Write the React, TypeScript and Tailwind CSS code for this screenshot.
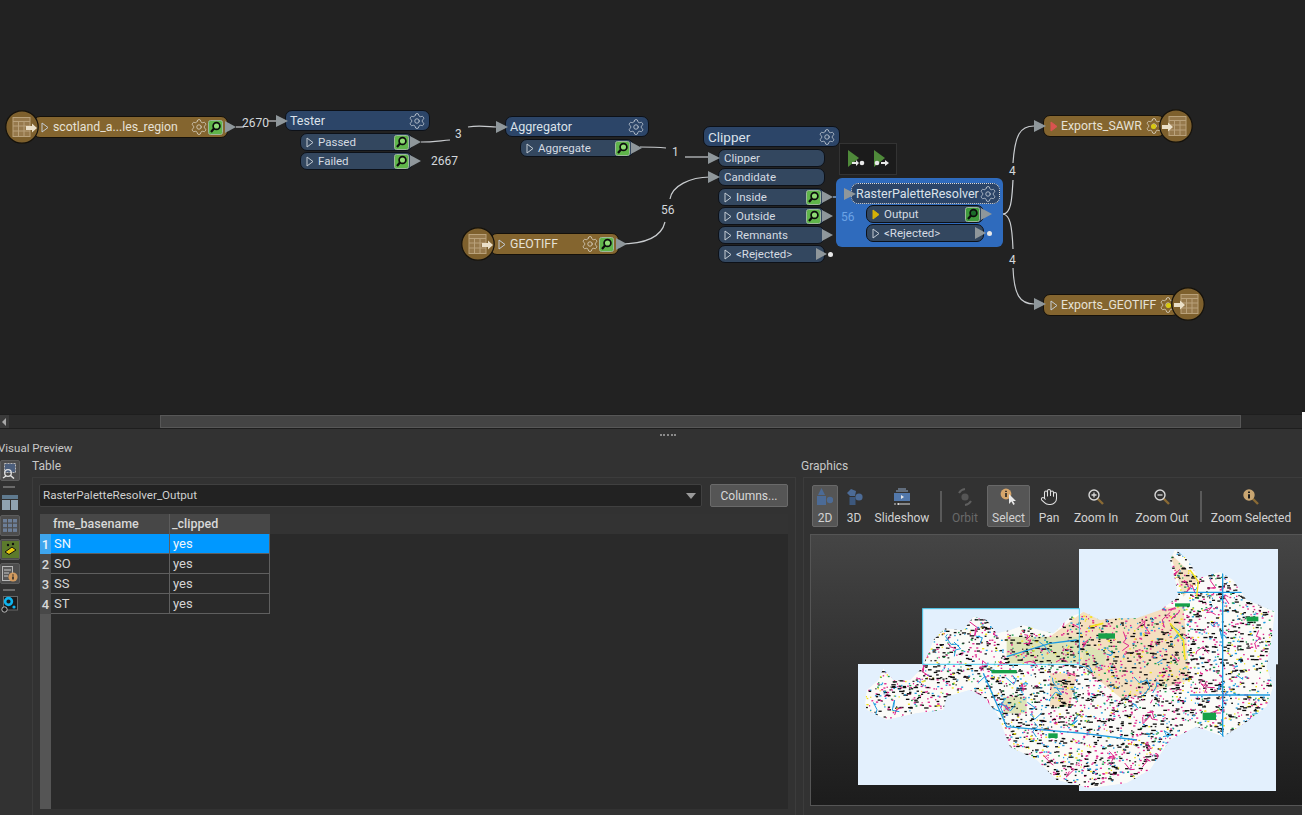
import React from "react";
import { Settings, Hand } from "lucide-react";

const FONT = "font-['Roboto','Open_Sans',sans-serif]";

// small drawings used on the canvas
const Gear = ({ className = "" }: { className?: string }) => (
  <Settings className={`w-[18px] h-[18px] shrink-0 ${className}`} strokeWidth={1.1} />
);

const Inspect = ({ dark = false }: { dark?: boolean }) => (
  <svg width="15" height="15" viewBox="0 0 15 15" className="shrink-0">
    <rect x="0.5" y="0.5" width="14" height="14" rx="2" fill={dark ? "#3f9a3c" : "#5fb54a"} stroke="#9db89a" />
    <circle cx="8.5" cy="6" r="3.4" fill={dark ? "#1c6b2a" : "#8fdc74"} stroke="#0c0c0c" strokeWidth="1.7" />
    <path d="M6 8.5 L3 12" stroke="#0c0c0c" strokeWidth="2.2" />
  </svg>
);

const OutPort = () => (
  <svg width="11" height="12" viewBox="0 0 11 12" className="shrink-0">
    <path d="M0 0 L11 6 L0 12 Z" fill="#8f979b" />
  </svg>
);

const InPort = ({ className }: { className: string }) => (
  <svg width="12" height="12" viewBox="0 0 12 12" className={`absolute z-10 ${className}`}>
    <path d="M0 0 L12 6 L0 12 Z" fill="#8f979b" />
  </svg>
);

const Expand = ({ fill = "none", stroke = "#c4ccd4" }: { fill?: string; stroke?: string }) => (
  <svg width="8" height="11" viewBox="0 0 8 11" className="shrink-0">
    <path d="M1 1 L7 5.5 L1 10 Z" fill={fill} stroke={stroke} strokeWidth="1" />
  </svg>
);

const TableDisc = ({ className, flip = false }: { className: string; flip?: boolean }) => (
  <div className={`absolute z-10 ${className}`}>
    <svg width="34" height="34" viewBox="0 0 34 34">
      <circle cx="17" cy="17" r="16.2" fill="#7e602d" stroke="#14110b" strokeWidth="1.2" />
      <g stroke="#b9a17a" strokeWidth="1" fill="#96794c">
        <rect x={flip ? 10 : 8} y="7.5" width="17" height="19" />
        <path
          d={flip ? "M10 11.5 H27 M10 16 H27 M10 21 H27 M15.5 11.5 V26.5 M21 11.5 V26.5" : "M8 11.5 H25 M8 16 H25 M8 21 H25 M13.5 11.5 V26.5 M19 11.5 V26.5"}
          fill="none"
        />
      </g>
      {flip ? (
        <path d="M3 16 H9 V13.5 L14 18 L9 22.5 V20 H3 Z" fill="#eadfc8" />
      ) : (
        <path d="M21 16 H27 V13.5 L32 18 L27 22.5 V20 H21 Z" fill="#eadfc8" />
      )}
    </svg>
  </div>
);

const Count = ({ className, children }: { className: string; children: React.ReactNode }) => (
  <span className={`absolute text-[12px] leading-[16px] text-[#d4d8dc] ${className}`}>{children}</span>
);

const Port = ({
  className,
  label,
  inspect = false,
  dark = false,
  expandFill,
  expandStroke,
  dot = false,
  out = true,
  expand = true,
}: {
  className: string;
  label: string;
  inspect?: boolean;
  dark?: boolean;
  expandFill?: string;
  expandStroke?: string;
  dot?: boolean;
  out?: boolean;
  expand?: boolean;
}) => (
  <div
    className={`absolute flex items-center h-[18px] pl-[5px] pr-[3px] gap-[4px] rounded-[7px] bg-[#33475f] border border-[#0d1118] text-[11.5px] text-[#d5dbe2] ${className}`}
  >
    {expand && <Expand fill={expandFill} stroke={expandStroke} />}
    <span className="flex-1 whitespace-nowrap pt-[2px]">{label}</span>
    {inspect && <Inspect dark={dark} />}
    {out ? (
      <span className="absolute right-[-9px] top-[2px] flex items-center">
        <OutPort />
        {dot && <span className="ml-[1px] w-[5px] h-[5px] rounded-full bg-[#e8e8e8]" />}
      </span>
    ) : null}
  </div>
);

const Head = ({ className, label, textSize = "text-[12.5px]", dashed = false }: { className: string; label: string; textSize?: string; dashed?: boolean }) => (
  <div
    className={`absolute flex items-center justify-between h-[21px] pl-[4px] pr-[3px] rounded-[7px] bg-[#2c4568] border text-[#dbe2ea] ${
      dashed ? "border-dotted border-[#d8d8d8]" : "border-[#0d1118]"
    } ${textSize} ${className}`}
  >
    <span className="whitespace-nowrap pt-[1px]">{label}</span>
    <Gear className="text-[#c4ccd6]" />
  </div>
);

const Bar = ({
  className,
  label,
  gearDot = false,
  inspect = false,
  expandFill,
  expandStroke,
  pad = "pl-[8px]",
}: {
  className: string;
  label: string;
  gearDot?: boolean;
  inspect?: boolean;
  expandFill?: string;
  expandStroke?: string;
  pad?: string;
}) => (
  <div
    className={`absolute flex items-center h-[22px] gap-[4px] rounded-[7px] bg-[#84652f] border border-[#15110a] text-[12.3px] text-[#e6e1d6] ${pad} ${className}`}
  >
    <Expand fill={expandFill} stroke={expandStroke} />
    <span className="flex-1 whitespace-nowrap pt-[1px]">{label}</span>
    <span className={`relative flex items-center justify-center ${inspect ? "-mr-[4px]" : ""}`}>
      <Gear className="text-[#d9d2c2]" />
      {gearDot && <span className="absolute w-[5px] h-[5px] rounded-full bg-[#d8c90e]" />}
    </span>
    {inspect && <Inspect />}
  </div>
);

const Canvas = () => (
  <div className="relative h-[414px] bg-[#222222] overflow-hidden">
    <svg width="1305" height="414" className="absolute inset-0" fill="none" stroke="#c9cccf" strokeWidth="1.2">
      <path d="M236 127 H244" />
      <path d="M268 121 H276" />
      <path d="M421 142 C432 142 438 141 450 140" />
      <path d="M468 127 C480 125 490 127 496 127" />
      <path d="M640 147 C650 147 656 147 666 148" />
      <path d="M685 157 H708" />
      <path d="M619 244 C650 244 662 235 665 222" />
      <path d="M670 199 C672 186 690 177 710 177" />
      <path d="M1003 214 C1012 214 1012 195 1013 180" stroke="#d0d4d8" />
      <path d="M1013 163 C1015 135 1020 126 1034 126" />
      <path d="M1003 214 C1010 215 1012 225 1013 249" />
      <path d="M1013 268 C1014 295 1020 304 1034 304" />
      <path d="M985 214 H1003" stroke="#9cc4f2" />
      <path d="M836 194 H851" stroke="#9cc4f2" />
      <path d="M833 197 H845" stroke="#9cc4f2" />
    </svg>

    {/* reader */}
    <TableDisc className="left-[5px] top-[110px]" />
    <Bar className="left-[33px] top-[116px] w-[195px] pr-[4px]" label="scotland_a...les_region" inspect pad="pl-[7px]" />
    <span className="absolute left-[225px] top-[121px]"><OutPort /></span>
    <Count className="left-[242px] top-[115px]">2670</Count>
    <InPort className="left-[276px] top-[115px]" />

    {/* tester */}
    <Head className="left-[285px] top-[110px] w-[145px]" label="Tester" />
    <Port className="left-[300px] top-[133px] w-[113px]" label="Passed" inspect />
    <Port className="left-[300px] top-[152px] w-[113px]" label="Failed" inspect />
    <Count className="left-[455px] top-[126px]">3</Count>
    <Count className="left-[431px] top-[153px]">2667</Count>

    {/* aggregator */}
    <InPort className="left-[496px] top-[121px]" />
    <Head className="left-[505px] top-[116px] w-[144px]" label="Aggregator" />
    <Port className="left-[520px] top-[139px] w-[114px]" label="Aggregate" inspect />
    <Count className="left-[672px] top-[144px]">1</Count>

    {/* clipper */}
    <Head className="left-[703px] top-[126px] w-[137px]" label="Clipper" textSize="text-[13.5px]" />
    <InPort className="left-[708px] top-[152px]" />
    <InPort className="left-[708px] top-[171px]" />
    <Port className="left-[718px] top-[149px] w-[107px]" label="Clipper" out={false} expand={false} />
    <Port className="left-[718px] top-[168px] w-[107px]" label="Candidate" out={false} expand={false} />
    <Port className="left-[718px] top-[188px] w-[107px]" label="Inside" inspect />
    <Port className="left-[718px] top-[207px] w-[107px]" label="Outside" inspect />
    <Port className="left-[718px] top-[226px] w-[107px]" label="Remnants" />
    <Port className="left-[718px] top-[245px] w-[107px]" label="<Rejected>" dot />
    <Count className="left-[661px] top-[202px]">56</Count>

    {/* geotiff */}
    <TableDisc className="left-[461px] top-[227px]" />
    <Bar className="left-[490px] top-[233px] w-[129px] pr-[4px]" label="GEOTIFF" inspect pad="pl-[7px]" />
    <span className="absolute left-[616px] top-[238px]"><OutPort /></span>

    {/* run buttons */}
    <div className="absolute left-[839px] top-[143px] flex items-center gap-[9px] w-[58px] h-[32px] pl-[8px] bg-[#1b1b1b] border border-[#333333]">
      <svg width="17" height="18" viewBox="0 0 17 18">
        <path d="M0 0 L11 8 L0 17 Z" fill="#4f8a3a" />
        <path d="M4 12 H8 V10 L11 13 L8 16 V14 H4 Z" fill="#e8e8e8" />
        <circle cx="14" cy="13" r="2.3" fill="#e8e8e8" />
      </svg>
      <svg width="17" height="18" viewBox="0 0 17 18">
        <path d="M0 0 L11 8 L0 17 Z" fill="#4f8a3a" />
        <circle cx="3" cy="13" r="2.3" fill="#e8e8e8" />
        <path d="M7 12 H11 V10 L15 13 L11 16 V14 H7 Z" fill="#e8e8e8" />
      </svg>
    </div>

    {/* selected transformer */}
    <div className="absolute left-[836px] top-[178px] w-[167px] h-[69px] rounded-[6px] bg-[#2f6bbd]" />
    <span className="absolute left-[841px] top-[208px] text-[12px] text-[#6ba3e6]">56</span>
    <Head className="left-[851px] top-[183px] w-[149px]" label="RasterPaletteResolver" dashed />
    <InPort className="left-[844px] top-[188px]" />
    <Port className="left-[866px] top-[205px] w-[118px]" label="Output" inspect dark expandFill="#d4b106" expandStroke="#d4b106" />
    <Port className="left-[866px] top-[224px] w-[118px]" label="<Rejected>" dot />

    {/* writers */}
    <InPort className="left-[1034px] top-[120px]" />
    <Bar className="left-[1043px] top-[115px] w-[122px] pr-[6px] !gap-[3px]" label="Exports_SAWR" gearDot expandFill="#d9534f" expandStroke="#d9534f" pad="pl-[6px]" />
    <TableDisc className="left-[1159px] top-[109px]" flip />
    <Count className="left-[1009px] top-[163px]">4</Count>
    <Count className="left-[1009px] top-[252px]">4</Count>
    <InPort className="left-[1034px] top-[298px]" />
    <Bar className="left-[1043px] top-[294px] w-[136px] pr-[7px] !gap-[3px]" label="Exports_GEOTIFF" gearDot pad="pl-[6px]" />
    <TableDisc className="left-[1171px] top-[287px]" flip />
  </div>
);

const ScrollBar = () => (
  <div className="flex items-center h-[15px] bg-[#2b2b2b] border-y border-[#1e1e1e]">
    <div className="flex items-center justify-center w-[9px] h-full bg-[#3a3a3a]">
      <svg width="5" height="8" viewBox="0 0 5 8"><path d="M4 0 L0 4 L4 8 Z" fill="#a8a8a8" /></svg>
    </div>
    <div className="ml-[151px] w-[1081px] h-[13px] bg-[#444444] border border-[#575757]" />
  </div>
);

// seeded so the picture stays the same on each load
const rng = (seed: number) => () => {
  seed = (seed * 16807) % 2147483647;
  return seed / 2147483647;
};

const LAND =
  "45,490 50,450 85,420 100,385 130,420 180,420 215,385 235,340 250,300 285,265 340,270 370,230 410,240 440,280 480,270 520,255 570,270 610,280 660,230 700,215 750,240 800,235 860,235 930,210 985,170 975,120 960,60 975,28 1015,60 1045,115 1110,95 1150,120 1190,180 1240,200 1275,215 1265,300 1250,380 1270,440 1250,500 1190,545 1120,590 1040,560 960,600 900,690 830,730 720,745 620,720 560,660 480,620 440,520 400,470 360,450 290,470 280,510 200,520 110,540 50,510";

const COLORS = ["#111111", "#111111", "#111111", "#2a2a2a", "#e0218a", "#e0218a", "#e0218a", "#1e9be0", "#1e9be0", "#1a9a4a", "#f2e31c"];

const marks = (() => {
  const r = rng(4711);
  return Array.from({ length: 7000 }, () => {
    const c = COLORS[Math.floor(r() * COLORS.length)];
    return { x: 40 + r() * 1240, y: 30 + r() * 720, w: c === "#111111" ? 5 + r() * 9 : 3 + r() * 4, c };
  });
})();

// short road pieces, pink and blue
const roads = (() => {
  const r = rng(90210);
  return Array.from({ length: 150 }, (_, i) => {
    let x = 60 + r() * 1200;
    let y = 60 + r() * 680;
    let d = `M${x.toFixed(0)} ${y.toFixed(0)}`;
    const steps = 2 + Math.floor(r() * 3);
    for (let s = 0; s < steps; s++) {
      x += (r() - 0.5) * 50;
      y += (r() - 0.5) * 50;
      d += ` L${x.toFixed(0)} ${y.toFixed(0)}`;
    }
    return { d, c: i % 5 < 3 ? "#e0218a" : "#1e9be0" };
  });
})();

const MapPicture = () => (
  <svg width="440" height="260" viewBox="0 0 1320 780" className="absolute left-[39px] top-[5px]">
    <defs>
      <clipPath id="land">
        <polygon points={LAND} />
      </clipPath>
      <filter id="soft">
        <feGaussianBlur stdDeviation="1.6" />
      </filter>
    </defs>
    <rect x="24" y="372" width="663" height="363" fill="#e3f0fd" />
    <rect x="218" y="206" width="470" height="167" fill="#e3f0fd" />
    <rect x="687" y="27" width="597" height="346" fill="#e3f0fd" />
    <rect x="687" y="372" width="591" height="381" fill="#e3f0fd" />
    <g clipPath="url(#land)" filter="url(#soft)">
      <polygon points={LAND} fill="#fbfbf8" />
      <path d="M600 290 L700 215 L1000 200 L1020 420 L820 480 L720 400 Z" fill="#f4dfc0" />
      <path d="M960 40 L1045 120 L1000 170 Z" fill="#f4dfc0" />
      <path d="M470 290 L690 290 L690 370 L470 370 Z" fill="#dde3b6" />
      <path d="M460 470 L530 470 L530 520 L460 520 Z" fill="#dde3b6" />
      <path d="M700 310 L770 340 L760 390 L700 370 Z" fill="#dde3b6" />
      <path d="M600 400 L680 400 L660 500 L600 500 Z" fill="#f4dfc0" />
      {marks.map((m, i) => (
        <rect key={i} x={m.x} y={m.y} width={m.w} height="4" fill={m.c} />
      ))}
      {roads.map((p, i) => (
        <path key={i} d={p.d} fill="none" stroke={p.c} strokeWidth="3" />
      ))}
      <g fill="none" strokeWidth="4">
        <path d="M980 157 H1190 M1118 100 V590 M1020 465 H1260" stroke="#1e9be0" />
        <path d="M470 350 L600 310 L680 300 M400 400 L470 560 L700 580 L860 600" stroke="#1e9be0" />
        <path d="M960 250 L1000 300 L1005 360" stroke="#f2e31c" strokeWidth="5" />
        <path d="M720 260 L760 250" stroke="#f2e31c" strokeWidth="5" />
        <path d="M1020 90 L1045 125 L1040 170" stroke="#f2e31c" strokeWidth="4" />
      </g>
      <g fill="#12a04a">
        <rect x="425" y="390" width="75" height="10" />
        <rect x="745" y="280" width="50" height="16" />
        <rect x="1190" y="230" width="35" height="14" />
        <rect x="1058" y="518" width="40" height="22" />
        <rect x="595" y="580" width="28" height="14" />
        <rect x="975" y="190" width="45" height="10" />
      </g>
    </g>
    <rect x="218" y="206" width="470" height="167" fill="none" stroke="#4fd0f5" strokeWidth="3" />
  </svg>
);

const ToolBtn = ({ label, active = false, dim = false, children, className = "" }: { label: string; active?: boolean; dim?: boolean; children: React.ReactNode; className?: string }) => (
  <div
    className={`flex flex-col items-center justify-between h-[42px] pt-[2px] rounded-[2px] text-[12px] leading-[16px] whitespace-nowrap ${
      active ? "bg-[#555555] border border-[#686868]" : "border border-transparent"
    } ${dim ? "text-[#696969]" : "text-[#d2d2d2]"} ${className}`}
  >
    <span className="flex items-center justify-center h-[18px]">{children}</span>
    <span>{label}</span>
  </div>
);

const Loupe = ({ mark, tan = false }: { mark: "plus" | "minus" | "info"; tan?: boolean }) => (
  <svg width="18" height="18" viewBox="0 0 18 18">
    <path d="M10.5 10.5 L16 16" stroke="#8a6a34" strokeWidth="2.4" />
    <circle cx="7" cy="7" r="5" fill={tan ? "#c9a672" : "none"} stroke={tan ? "#c9a672" : "#d8d8d8"} strokeWidth="1.4" />
    {mark === "plus" && <path d="M4.5 7 H9.5 M7 4.5 V9.5" stroke="#d8d8d8" strokeWidth="1.3" />}
    {mark === "minus" && <path d="M4.5 7 H9.5" stroke="#d8d8d8" strokeWidth="1.3" />}
    {mark === "info" && <path d="M7 3.5 V5 M7 6.2 V10.5" stroke="#1c1c1c" strokeWidth="2" />}
  </svg>
);

const Sep = ({ className }: { className: string }) => <span className={`w-[2px] h-[31px] bg-[#5a5a5a] ${className}`} />;

const SideBtn = ({ children, framed = true }: { children: React.ReactNode; framed?: boolean }) => (
  <div className={`flex items-center justify-center w-[20px] ${framed ? "h-[21px] rounded-[2px] bg-[#4d4d4d] border border-[#5d5d5d]" : "h-[19px]"}`}>{children}</div>
);

const Sidebar = () => (
  <div className="flex flex-col items-start gap-[3px] w-[32px] shrink-0">
    <SideBtn>
      <svg width="16" height="16" viewBox="0 0 16 16">
        <rect x="2.5" y="0.5" width="11" height="9" fill="#4c5f7d" stroke="#b8b8b8" strokeDasharray="2 1" />
        <circle cx="6" cy="10" r="3.3" fill="none" stroke="#e2e2e2" strokeWidth="1.3" />
        <path d="M8.5 12.5 L12 15.5 M1 15 L4 13" stroke="#e2e2e2" strokeWidth="1.5" />
      </svg>
    </SideBtn>
    <span className="ml-[3px] my-[2px] w-[12px] h-[2px] bg-[#6a6a6a]" />
    <SideBtn framed={false}>
      <svg width="16" height="15" viewBox="0 0 16 15">
        <rect width="16" height="4" fill="#5f7a8f" />
        <rect y="5" width="8" height="10" fill="#8fa2b0" />
        <rect x="9" y="5" width="7" height="10" fill="#8fa2b0" />
      </svg>
    </SideBtn>
    <SideBtn>
      <svg width="14" height="13" viewBox="0 0 14 13" fill="#6d7f98">
        <rect width="4" height="3.5" /><rect x="5" width="4" height="3.5" /><rect x="10" width="4" height="3.5" />
        <rect y="4.7" width="4" height="3.5" /><rect x="5" y="4.7" width="4" height="3.5" /><rect x="10" y="4.7" width="4" height="3.5" />
        <rect y="9.4" width="4" height="3.5" /><rect x="5" y="9.4" width="4" height="3.5" /><rect x="10" y="9.4" width="4" height="3.5" />
      </svg>
    </SideBtn>
    <SideBtn>
      <svg width="17" height="17" viewBox="0 0 17 17">
        <rect width="17" height="17" fill="#5c7a2c" />
        <path d="M3 11 L7 13.5 L14 9 L10 6 Z" fill="#e3c60f" stroke="#111" strokeWidth="1" />
        <circle cx="6" cy="4" r="1.2" fill="#111" />
        <circle cx="11" cy="3" r="1.2" fill="#111" />
      </svg>
    </SideBtn>
    <SideBtn>
      <svg width="16" height="16" viewBox="0 0 16 16">
        <rect x="0.5" y="0.5" width="10" height="14" fill="#585858" stroke="#b8b8b8" />
        <path d="M2 4 H9 M2 7 H7 M2 10 H6" stroke="#c8c8c8" />
        <circle cx="11" cy="11" r="4.6" fill="#d19a5f" />
        <path d="M11 8.4 V9.6 M11 10.6 V13.6" stroke="#222" strokeWidth="1.5" />
      </svg>
    </SideBtn>
    <span className="ml-[3px] my-[2px] w-[12px] h-[2px] bg-[#6a6a6a]" />
    <svg width="17" height="17" viewBox="0 0 17 17" className="ml-[1px]">
      <rect x="2.5" y="0.5" width="14" height="13.5" fill="#1c1c1c" stroke="#666" />
      <circle cx="7.5" cy="5.5" r="3.4" fill="none" stroke="#0fb4ee" strokeWidth="2.6" />
      <circle cx="13" cy="11" r="1.6" fill="#0fb4ee" />
      <circle cx="3.5" cy="13.5" r="2.7" fill="#1c1c1c" stroke="#bcbcbc" />
    </svg>
  </div>
);

const rows = [
  ["1", "SN", "yes"],
  ["2", "SO", "yes"],
  ["3", "SS", "yes"],
  ["4", "ST", "yes"],
];

const TablePanel = () => (
  <div className="flex flex-col w-[764px] shrink-0">
    <div className="h-[17px] text-[12px] leading-[12px] text-[#c8c8c8]">Table</div>
    <div className="flex-1 flex flex-col border border-[#3c3c3c] border-b-0 pl-[6px] pr-[7px] pt-[6px] min-h-0">
      <div className="flex gap-[8px] h-[23px]">
        <div className="flex-1 flex items-center justify-between pl-[3px] pr-[5px] bg-[#222222] border border-[#404040] rounded-[2px] text-[11.6px] text-[#d0d0d0]">
          <span>RasterPaletteResolver_Output</span>
          <svg width="10" height="6" viewBox="0 0 10 6"><path d="M0 0 H10 L5 6 Z" fill="#9a9a9a" /></svg>
        </div>
        <div className="flex items-center justify-center w-[78px] bg-[#555555] border border-[#6a6a6a] rounded-[2px] text-[12px] text-[#d8d8d8]">Columns...</div>
      </div>
      <div className="mt-[7px] h-[295px] ml-[1px] flex flex-col bg-[#2a2a2a]">
        <div className="flex h-[20px] bg-[#333333] text-[12.5px] font-medium text-[#d8d8d8]">
          <div className="w-[11px] bg-[#474747]" />
          <div className="w-[119px] pl-[2px] bg-[#474747] border-r border-[#5c5c5c] leading-[20px]">fme_basename</div>
          <div className="w-[100px] pl-[2px] bg-[#474747] leading-[20px]">_clipped</div>
        </div>
        {rows.map(([n, a, b], i) => (
          <div key={n} className="flex h-[20px] text-[13px] leading-[19px] text-[#d4d4d4]">
            <div className={`flex items-center justify-center w-[11px] text-[13px] font-medium ${i === 0 ? "bg-[#3fa6ee] text-[#eaf4fc]" : "bg-[#484848] text-[#d8d8d8]"}`}>{n}</div>
            <div className={`w-[119px] pl-[3px] border-b border-r border-[#5f5f5f] ${i === 0 ? "bg-[#0098ff] text-[#f0f7fd]" : ""}`}>{a}</div>
            <div className={`w-[100px] pl-[3px] border-b border-r border-[#5f5f5f] ${i === 0 ? "bg-[#0098ff] text-[#f0f7fd]" : ""}`}>{b}</div>
          </div>
        ))}
        <div className="flex-1 w-[11px] bg-[#555555]" />
      </div>
    </div>
  </div>
);

const GraphicsPanel = () => (
  <div className="flex-1 flex flex-col min-w-0 ml-[5px]">
    <div className="h-[17px] text-[12px] leading-[12px] text-[#c8c8c8]">Graphics</div>
    <div className="flex-1 flex flex-col border-l border-t border-[#3c3c3c] ml-[2px] pt-[7px] pl-[6px] min-h-0">
      <div className="flex items-center h-[42px] pl-[2px]">
        <ToolBtn label="2D" active className="w-[26px]">
          <svg width="16" height="18" viewBox="0 0 16 18" fill="#4c6b96">
            <path d="M4.5 0 L8 7 H1 Z" /><rect x="0" y="8" width="9" height="9" /><circle cx="13" cy="12" r="3.2" />
          </svg>
        </ToolBtn>
        <ToolBtn label="3D" className="w-[32px]">
          <svg width="17" height="18" viewBox="0 0 17 18" fill="#4c6b96">
            <path d="M5 1 L10 3 L9 8 L4 8 L1 5 Z" /><rect x="3.5" y="9" width="6" height="8" fill="#3d587d" /><circle cx="13" cy="9" r="3.6" />
          </svg>
        </ToolBtn>
        <ToolBtn label="Slideshow" className="w-[64px]">
          <svg width="18" height="18" viewBox="0 0 18 18">
            <path d="M5 1 H13 M3 3 H15" stroke="#8fa8c8" /><rect x="1" y="5" width="16" height="8" fill="#5278ab" />
            <path d="M8 7 L11 9 L8 11 Z" fill="#e8e8e8" /><path d="M1 16 H3 M7 16 H17" stroke="#d8d8d8" /><rect x="4.5" y="15" width="2" height="2" fill="#d8d8d8" />
          </svg>
        </ToolBtn>
        <Sep className="ml-[6px] mr-[6px]" />
        <ToolBtn label="Orbit" dim className="w-[34px]">
          <svg width="18" height="18" viewBox="0 0 18 18" fill="none" stroke="#5f5f5f" strokeWidth="2">
            <circle cx="9" cy="9" r="3.6" fill="#555555" stroke="none" /><path d="M3 5 A8 8 0 0 1 9 1" /><path d="M15 13 A8 8 0 0 1 9 17" />
          </svg>
        </ToolBtn>
        <ToolBtn label="Select" active className="ml-[5px] w-[43px]">
          <svg width="18" height="18" viewBox="0 0 18 18">
            <circle cx="6" cy="6" r="5.4" fill="#d7a66b" /><path d="M6 2.8 V4 M6 5 V9" stroke="#222" strokeWidth="1.6" />
            <path d="M9 6 L9 16 L11.4 13.6 L13.4 17 L14.8 16 L13 13 L16 13 Z" fill="#e8e8e8" />
          </svg>
        </ToolBtn>
        <ToolBtn label="Pan" className="w-[38px]">
          <Hand className="w-[18px] h-[18px] text-[#e2e2e2]" strokeWidth={1.4} />
        </ToolBtn>
        <ToolBtn label="Zoom In" className="w-[56px]">
          <Loupe mark="plus" />
        </ToolBtn>
        <ToolBtn label="Zoom Out" className="ml-[4px] w-[68px]">
          <Loupe mark="minus" />
        </ToolBtn>
        <Sep className="ml-[4px] mr-[4px]" />
        <ToolBtn label="Zoom Selected" className="w-[90px]">
          <Loupe mark="info" tan />
        </ToolBtn>
      </div>
      <div className="relative mt-[7px] h-[272px] shrink-0 overflow-hidden border border-[#555555] border-r-0 bg-gradient-to-b from-[#454545] to-[#1c1c1c]">
        <MapPicture />
      </div>
    </div>
  </div>
);

export default function App() {
  return (
    <div className={`relative w-[1305px] h-[815px] flex flex-col overflow-hidden bg-[#323232] ${FONT}`}>
      <Canvas />
      <ScrollBar />
      <div className="flex items-center justify-center h-[11px] pl-[30px]">
        <span className="w-[16px] h-[2px] border-t-2 border-dotted border-[#8a8a8a]" />
      </div>
      <div className="h-[20px] -ml-[2px] text-[11.5px] leading-[16px] text-[#c8c8c8]">Visual Preview</div>
      <div className="flex-1 flex min-h-0">
        <Sidebar />
        <TablePanel />
        <GraphicsPanel />
      </div>
      {/* white edge left in the source capture */}
      <div className="absolute right-0 top-[412px] bottom-0 w-[3px] bg-white" />
    </div>
  );
}
